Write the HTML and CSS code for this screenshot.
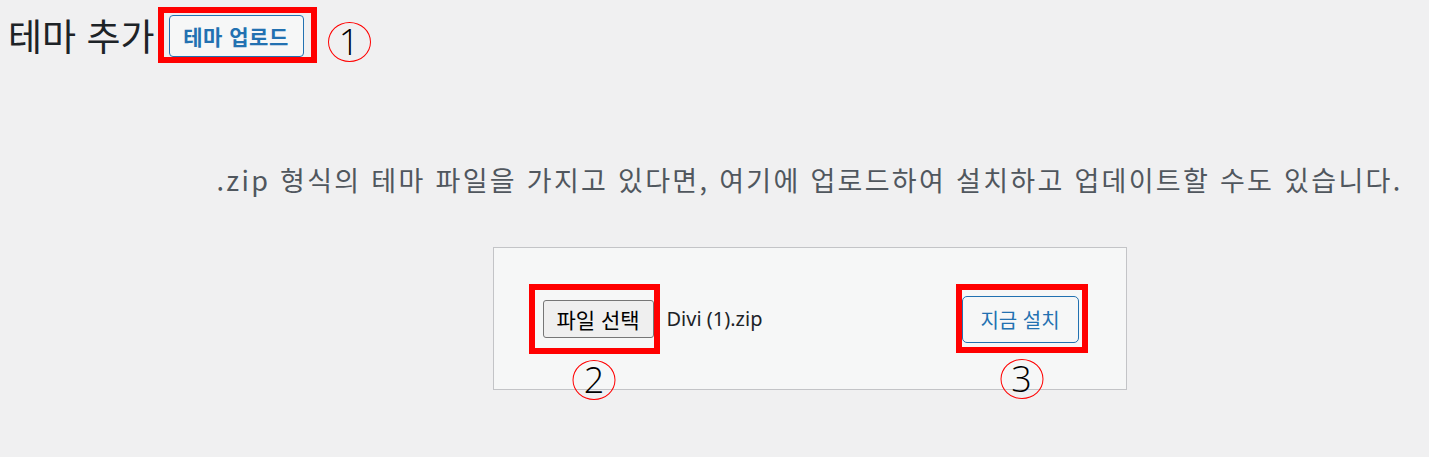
FILE: index.html
```html
<!DOCTYPE html>
<html lang="ko">
<head>
  <meta charset="UTF-8">
  <meta name="viewport" content="width=device-width, initial-scale=1.0">
  <title>테마 추가</title>
  <link rel="stylesheet" href="styles.css">
</head>
<body>

  <div class="page-head">
    <h1>테마 추가</h1>
    <span class="mark mark-top">
      <button class="title-action">테마 업로드</button>
    </span>
    <span class="num num-top">1</span>
  </div>

  <div class="wrap">
    <p class="install-help">.zip 형식의 테마 파일을 가지고 있다면, 여기에 업로드하여 설치하고 업데이트할 수도 있습니다.</p>

    <div class="upload-form">
      <div class="file-group">
        <span class="mark mark-file">
          <button class="file-btn">파일 선택</button>
          <span class="num num-below">2</span>
        </span>
        <span class="file-name">Divi (1).zip</span>
      </div>
      <span class="mark mark-install">
        <button class="install-btn">지금 설치</button>
        <span class="num num-below">3</span>
      </span>
    </div>
  </div>

</body>
</html>
```

FILE: styles.css
```css
html, body {
  overflow: hidden;
}

body {
  margin: 0;
  background-color: #f0f0f1;
  font-family: "Noto Sans CJK KR", "Noto Sans", sans-serif;
  color: #1d2327;
  height: 457px;
}

button {
  font-family: "Noto Sans CJK KR", "Noto Sans", sans-serif;
  cursor: pointer;
}

.page-head {
  display: flex;
  align-items: center;
  padding: 7px 0 0 8px;
}

.page-head h1 {
  font-size: 37px;
  font-weight: 400;
  line-height: 1;
  margin: 0 3px 0 0;
  color: #1d2327;
}

/* red annotation frames */
.mark {
  border: 6px solid #ff0000;
  display: inline-flex;
  position: relative;
}

.mark-top {
  padding: 2px 7px 0 5px;
}

.title-action {
  width: 135px;
  height: 42px;
  border: 1px solid #2271b1;
  border-radius: 4px;
  background: #f6f7f7;
  color: #2271b1;
  font-size: 21px;
  font-weight: 700;
  letter-spacing: 0.5px;
  padding: 0;
}

.num {
  width: 43px;
  height: 40px;
  box-sizing: border-box;
  border: 1.5px solid #ff0000;
  border-radius: 50%;
  display: inline-flex;
  align-items: center;
  justify-content: center;
  font-family: "Open Sans", "Noto Sans", sans-serif;
  font-size: 36px;
  font-weight: 300;
  line-height: 1;
  color: #000;
}

.num-top {
  margin: 13px 0 0 11px;
}

.num-below {
  position: absolute;
  top: calc(100% + 12px);
  left: 50%;
  transform: translateX(-50%);
}

.wrap {
  padding-left: 190px;
}

.install-help {
  margin: 98px 0 0;
  line-height: 38px;
  font-size: 27px;
  letter-spacing: 2.3px;
  text-align: center;
  color: #50575e;
}

.upload-form {
  box-sizing: border-box;
  width: 634px;
  height: 143px;
  margin: 48px auto 0;
  padding: 0 38px 0 35px;
  background: #f6f7f7;
  border: 1px solid #c3c4c7;
  display: flex;
  align-items: center;
  justify-content: space-between;
}

.file-group {
  display: flex;
  align-items: center;
}

.mark-file {
  padding: 10px 0 10px 8px;
}

.file-btn {
  width: 111px;
  height: 38px;
  border: 1px solid #767676;
  border-radius: 3px;
  background: #efefef;
  color: #000;
  font-size: 21px;
  padding: 0;
}

.file-name {
  margin-left: 7px;
  font-family: "Noto Sans", sans-serif;
  font-size: 20px;
  color: #1d2327;
}

.mark-install {
  padding: 6px 3px 4px 0;
}

.install-btn {
  width: 117px;
  height: 47px;
  border: 1px solid #2271b1;
  border-radius: 5px;
  background: #f6f7f7;
  color: #2271b1;
  font-size: 20px;
  padding: 0;
}
```
